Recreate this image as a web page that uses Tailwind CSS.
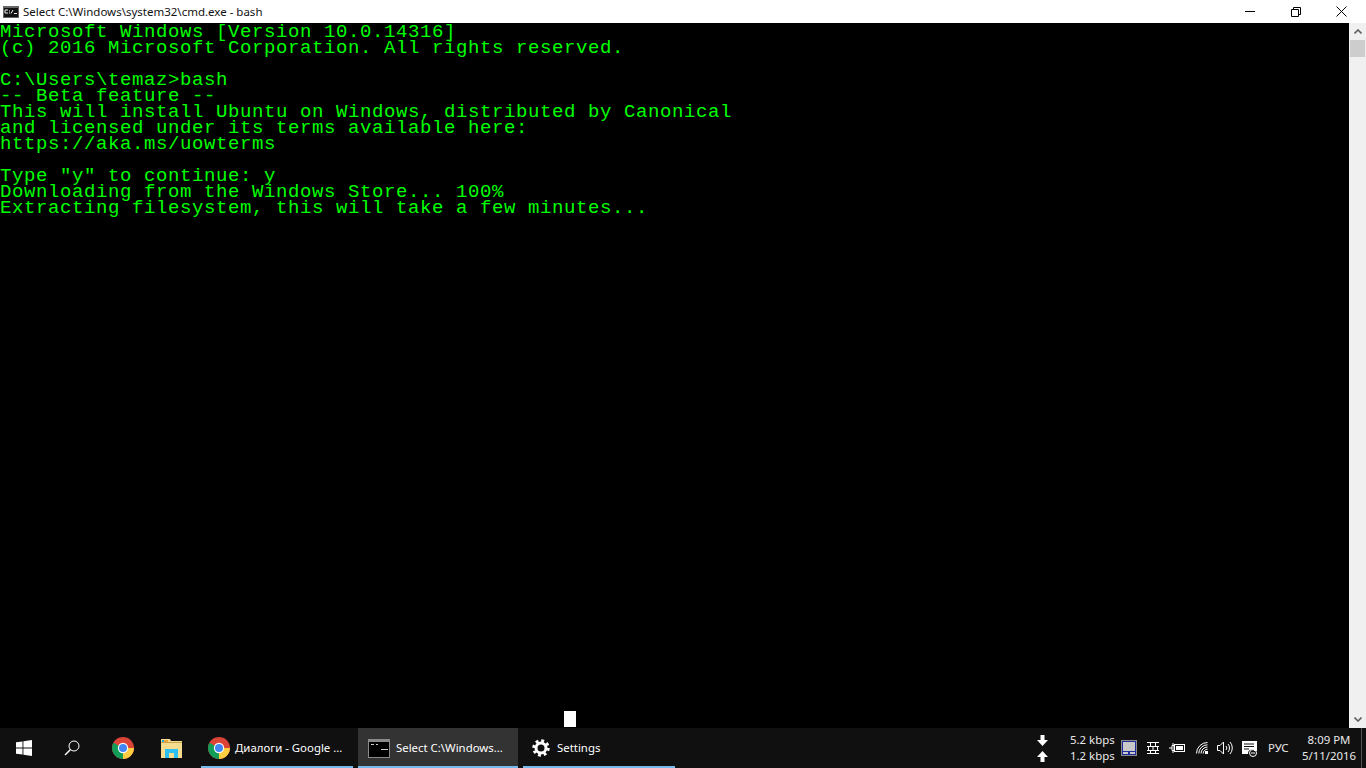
<!DOCTYPE html>
<html lang="en">
<head>
  <meta charset="UTF-8">
  <title>Select C:\Windows\system32\cmd.exe - bash</title>
  <script src="https://cdn.jsdelivr.net/npm/@tailwindcss/browser@4"></script>
</head>
<body class="w-[1366px] h-[768px] overflow-hidden bg-black flex flex-col font-['Noto_Sans','Open_Sans',sans-serif]">

  <!-- title bar -->
  <div class="h-[23px] bg-white flex items-center shrink-0">
    <svg class="ml-[3px] w-[16px] h-[12px]" viewBox="0 0 16 12">
      <rect width="16" height="12" fill="#666"/>
      <rect x="1" y="2" width="14" height="9" fill="#111"/>
      <path d="M2 4H5M2 7H5M2 4V7M6.500 4.500V5.500M6.500 6.500V7.500M8 7.500L10 4M11 7.500H14" stroke="#eee" fill="none"/>
    </svg>
    <span class="ml-[4px] text-[11.5px] leading-[23px] text-[#111] whitespace-nowrap">Select C:\Windows\system32\cmd.exe - bash</span>
    <div class="ml-auto mr-[2px] flex items-center">
      <div class="w-[46px] h-[23px] flex items-center justify-center">
        <div class="w-[10px] h-px bg-black"></div>
      </div>
      <div class="w-[45px] h-[23px] flex items-center justify-center">
        <svg class="w-[10px] h-[10px]" viewBox="0 0 10 10" fill="none" stroke="#000"><path d="M2.500 2.500V.5h7v7h-2M.5 2.500h7v7h-7z"/></svg>
      </div>
      <div class="w-[46px] h-[23px] flex items-center justify-center">
        <svg class="w-[11px] h-[11px]" viewBox="0 0 11 11" fill="none" stroke="#000"><path d="M.5.5l10 10M10.500.5l-10 10"/></svg>
      </div>
    </div>
  </div>

  <!-- console area -->
  <div class="relative flex-1 flex min-h-0">
    <pre class="flex-1 m-0 pt-px text-[#00ff00] text-[19px] leading-[16px] tracking-[0.6px] font-['Liberation_Mono',monospace]">Microsoft Windows [Version 10.0.14316]
(c) 2016 Microsoft Corporation. All rights reserved.

C:\Users\temaz&gt;bash
-- Beta feature --
This will install Ubuntu on Windows, distributed by Canonical
and licensed under its terms available here:
https://aka.ms/uowterms

Type "y" to continue: y
Downloading from the Windows Store... 100%
Extracting filesystem, this will take a few minutes...</pre>
    <div class="absolute left-[564px] top-[688px] w-[12px] h-[16px] bg-white"></div>
    <!-- scrollbar -->
    <div class="w-[17px] bg-[#f0f0f0] flex flex-col items-center">
      <div class="h-[17px] w-full flex items-center justify-center">
        <svg class="w-[8px] h-[5px]" viewBox="0 0 8 5" fill="none" stroke="#606060" stroke-width="1.600"><path d="M.5 4.500L4 1l3.500 3.500"/></svg>
      </div>
      <div class="h-[17px] w-[15px] bg-[#cdcdcd]"></div>
      <div class="flex-1"></div>
      <div class="h-[17px] w-full flex items-center justify-center">
        <svg class="w-[8px] h-[5px]" viewBox="0 0 8 5" fill="none" stroke="#606060" stroke-width="1.600"><path d="M.5.5L4 4l3.500-3.500"/></svg>
      </div>
    </div>
  </div>

  <!-- taskbar -->
  <div class="h-[40px] bg-[#101010] flex shrink-0 text-[11.4px] text-white">
    <div class="w-[48px] flex items-center justify-center">
      <svg class="w-[16px] h-[16px]" viewBox="0 0 16 16" fill="#fff"><path d="M0 2.300L6.500 1.400V7.600H0zM7.400 1.300L16 0V7.600H7.400zM0 8.400H6.500V14.600L0 13.700zM7.400 8.400H16V16L7.400 14.700z"/></svg>
    </div>
    <div class="w-[48px] flex items-center justify-center">
      <svg class="w-[16px] h-[16px]" viewBox="0 0 16 16" fill="none" stroke="#fff"><circle cx="10" cy="6" r="5"/><path d="M6.500 9.500L1 15" stroke-width="1.500"/></svg>
    </div>
    <div class="w-[54px] flex items-center justify-center">
      <svg class="w-[22px] h-[22px]" viewBox="0 0 22 22"><circle cx="11" cy="11" r="11" fill="#db4437"/><path d="M11 11L1.400 5.700A11 11 0 0 0 11 22z" fill="#0f9d58"/><path d="M11 11H22A11 11 0 0 1 11 22z" fill="#ffcd40"/><circle cx="11" cy="11" r="5.200" fill="#fff"/><circle cx="11" cy="11" r="4" fill="#4285f4"/></svg>
    </div>
    <div class="w-[44px] flex items-center justify-center">
      <svg class="w-[22px] h-[19px]" viewBox="0 0 22 19"><path d="M0 0H9L10 2H21V19H0z" fill="#f5dc8f"/><path d="M1 1H7V3H1z" fill="#e8a93a"/><rect x="1" y="1" width="2" height="2" fill="#2aa5e0"/><path d="M0 3H21V4H0z" fill="#c9a24a"/><path d="M4 19V10H17V19H13V14H8V19z" fill="#2cc0f2"/></svg>
    </div>
    <div class="ml-[7px] w-[152px] relative flex items-center pl-[7px] gap-[5px]">
      <svg class="w-[22px] h-[22px] shrink-0" viewBox="0 0 22 22"><circle cx="11" cy="11" r="11" fill="#db4437"/><path d="M11 11L1.400 5.700A11 11 0 0 0 11 22z" fill="#0f9d58"/><path d="M11 11H22A11 11 0 0 1 11 22z" fill="#ffcd40"/><circle cx="11" cy="11" r="5.200" fill="#fff"/><circle cx="11" cy="11" r="4" fill="#4285f4"/></svg>
      <span class="whitespace-nowrap">Диалоги - Google ...</span>
      <div class="absolute left-0 right-0 bottom-0 h-[2px] bg-[#76b9ed]"></div>
    </div>
    <div class="ml-[5px] w-[160px] relative flex items-center pl-[10px] gap-[6px] bg-[#333333]">
      <svg class="w-[22px] h-[19px] shrink-0" viewBox="0 0 22 19"><rect width="22" height="19" fill="#8a8a8a"/><rect x="1" y="3" width="20" height="15" fill="#000"/><path d="M3 5.500H6M8 5.500H10M13 10.500H20" stroke="#ccc"/></svg>
      <span class="whitespace-nowrap">Select C:\Windows...</span>
      <div class="absolute left-0 right-0 bottom-0 h-[2px] bg-[#76b9ed]"></div>
    </div>
    <div class="ml-[5px] w-[152px] relative flex items-center pl-[9px] gap-[7px]">
      <svg class="w-[18px] h-[18px] shrink-0" viewBox="0 0 18 18" fill="none" stroke="#fff"><circle cx="9" cy="9" r="5" stroke-width="3"/><circle cx="9" cy="9" r="7" stroke-width="3.500" stroke-dasharray="2.750 2.750"/></svg>
      <span>Settings</span>
      <div class="absolute left-0 right-0 bottom-0 h-[2px] bg-[#76b9ed]"></div>
    </div>

    <!-- tray -->
    <div class="ml-auto flex items-center">
      <div class="flex flex-col gap-[5px] items-center">
        <svg class="w-[11px] h-[11px]" viewBox="0 0 11 11" fill="#fff"><path d="M3.500 0H7.500V5H11L5.500 11 0 5H3.500z"/></svg>
        <svg class="w-[11px] h-[11px]" viewBox="0 0 11 11" fill="#fff"><path d="M3.500 11H7.500V6H11L5.500 0 0 6H3.500z"/></svg>
      </div>
      <div class="ml-[22px] w-[43px] flex flex-col leading-[16px] text-[#e8e8e8] whitespace-nowrap">
        <span>5.2 kbps</span>
        <span>1.2 kbps</span>
      </div>
      <svg class="ml-[8px] w-[16px] h-[16px]" viewBox="0 0 16 16"><rect width="16" height="16" fill="#8a8a8a"/><rect x="1" y="1" width="14" height="14" fill="#1e2a9a"/><rect x="2" y="2" width="12" height="9" fill="#c8c8c8"/><rect x="2" y="12" width="5" height="2" fill="#c8c8c8"/><rect x="9" y="12" width="5" height="2" fill="#c8c8c8"/></svg>
      <svg class="ml-[10px] w-[12px] h-[12px]" viewBox="0 0 12 12" fill="none" stroke="#fff"><path d="M0 .5H12M0 4.500H12M0 8.500H12M0 11.500H12M3.500 1V4M8.500 1V4M1.500 5V8M6 5V8M10.500 5V8M3.500 9V11M8.500 9V11"/></svg>
      <svg class="ml-[10px] w-[16px] h-[12px]" viewBox="0 0 16 12" fill="none" stroke="#fff"><rect x="5.500" y="2.500" width="10" height="7"/><rect x="7" y="4" width="7" height="4" fill="#fff" stroke="none"/><path d="M0 6H3M3 3.500H5V8.500H3zM4 1V3.500M4 8.500V11"/></svg>
      <svg class="ml-[11px] w-[12px] h-[12px]" viewBox="0 0 12 12" fill="none" stroke="#fff"><path d="M.5 11.500A11 11 0 0 1 11.500.5M2.800 11.500A8.700 8.700 0 0 1 11.500 2.800M5 11.500A6.500 6.500 0 0 1 11.500 5M7.200 11.500A4.300 4.300 0 0 1 11.500 7.200"/><rect x="9" y="9" width="3" height="3" fill="#fff" stroke="none"/></svg>
      <svg class="ml-[9px] w-[16px] h-[14px]" viewBox="0 0 16 14" fill="none" stroke="#fff"><path d="M.5 4.500H3L6.500 1V13L3 9.500H.5zM9 5A3 3 0 0 1 9 9M11 3A6 6 0 0 1 11 11M13 1A9 9 0 0 1 13 13"/></svg>
      <svg class="ml-[8px] w-[17px] h-[17px]" viewBox="0 0 17 17"><path d="M1 1H16V11H13V10A4 4 0 0 0 7 14H1z" fill="#fff"/><path d="M3 4H13M3 6.500H13M3 9H8" stroke="#111"/><circle cx="12" cy="13" r="3.500" fill="none" stroke="#fff"/><path d="M10 13H14" stroke="#fff"/></svg>
      <span class="ml-[10px] w-[22px] text-[#e8e8e8]">РУС</span>
      <div class="ml-[13px] w-[52px] flex flex-col items-center leading-[16px] text-[#e8e8e8] whitespace-nowrap">
        <span>8:09 PM</span>
        <span>5/11/2016</span>
      </div>
      <div class="ml-[6px] w-px h-[40px] bg-[#555]"></div>
      <div class="w-[4px]"></div>
    </div>
  </div>
</body>
</html>
